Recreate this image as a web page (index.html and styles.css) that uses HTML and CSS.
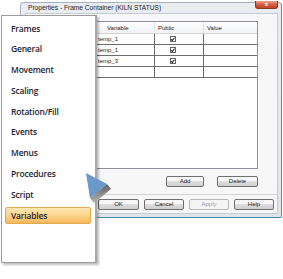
FILE: index.html
```html
<!DOCTYPE html>
<html lang="en">
<head>
  <meta charset="UTF-8" />
  <title>Properties - Variables</title>
  <link rel="stylesheet" href="styles.css">
</head>
<body>
  <div class="stage">
    <div class="dialog">
      <div class="titlebar">
        <span class="title">Properties - Frame Container (KILN STATUS)</span>
        <span class="close">x</span>
      </div>
      <div class="client">
        <div class="listbox">
          <table class="vars">
            <tr class="head">
              <th class="c-var">Variable</th>
              <th class="c-pub">Public</th>
              <th class="c-val">Value</th>
            </tr>
            <tr>
              <td class="c-var">temp_1</td>
              <td class="c-pub"><span class="check"></span></td>
              <td class="c-val"></td>
            </tr>
            <tr>
              <td class="c-var">temp_1</td>
              <td class="c-pub"><span class="check"></span></td>
              <td class="c-val"></td>
            </tr>
            <tr>
              <td class="c-var">temp_3</td>
              <td class="c-pub"><span class="check"></span></td>
              <td class="c-val"></td>
            </tr>
            <tr class="blank">
              <td class="c-var"></td>
              <td class="c-pub"></td>
              <td class="c-val"></td>
            </tr>
          </table>
        </div>
        <div class="list-actions">
          <button class="btn w38">Add</button>
          <button class="btn w41">Delete</button>
        </div>
        <div class="footer">
          <button class="btn w41">OK</button>
          <button class="btn w40">Cancel</button>
          <button class="btn w40" disabled>Apply</button>
          <button class="btn w40">Help</button>
        </div>
      </div>
    </div>

    <ul class="menu">
      <li>Frames</li>
      <li>General</li>
      <li>Movement</li>
      <li>Scaling</li>
      <li>Rotation/Fill</li>
      <li>Events</li>
      <li>Menus</li>
      <li>Procedures</li>
      <li>Script</li>
      <li class="active">Variables</li>
    </ul>

    <svg class="pointer" width="32" height="36" viewBox="0 0 32 36">
      <defs>
        <linearGradient id="shade" x1="0" y1="0" x2="0" y2="1">
          <stop offset="0" stop-color="#5f5f5f"/>
          <stop offset="1" stop-color="#b4b4b4"/>
        </linearGradient>
      </defs>
      <polygon points="23,14 27,19 10,33 6,28" fill="url(#shade)"/>
      <polygon points="2,3 23,14 6,28" fill="#6a98c9"/>
    </svg>
  </div>
</body>
</html>
```

FILE: styles.css
```css
body {
  margin: 0;
  background: #fff;
}
.stage {
  position: relative;
  width: 283px;
  height: 279px;
  overflow: hidden;
  background: #fff;
}

/* dialog window */
.dialog {
  position: absolute;
  left: 20px;
  top: 2px;
  width: 262px;
  height: 216px;
  box-sizing: border-box;
  padding: 0 3px 3px 4px;
  display: flex;
  flex-direction: column;
  background: linear-gradient(#e9edf1, #dfe5eb);
  border: 1px solid #a6b3bf;
  border-right-color: #5f8ea6;
  border-bottom-color: #3f8aa6;
  border-radius: 4px 4px 2px 2px;
}
.titlebar {
  position: relative;
  height: 10px;
  flex: none;
}
.title {
  display: block;
  padding-left: 3px;
  font: 6.6px/10px "Liberation Sans", Arial, sans-serif;
  color: #222;
  white-space: nowrap;
}
.close {
  position: absolute;
  right: 0;
  top: -2px;
  width: 23px;
  height: 8px;
  box-sizing: border-box;
  border: 1px solid #8a3626;
  border-top: none;
  border-radius: 0 0 3px 3px;
  background: linear-gradient(#eda48d, #d25a3f 55%, #c2432a);
  color: #fff;
  font: bold 6px/7px "Liberation Sans", Arial, sans-serif;
  text-align: center;
}
.client {
  flex: 1;
  display: flex;
  flex-direction: column;
  align-items: flex-end;
  background: #f7f7f7;
  border: 1px solid #c3ccd5;
  padding-top: 7px;
}

/* variables list */
.listbox {
  width: 164px;
  height: 148px;
  box-sizing: border-box;
  margin-right: 19px;
  border: 1px solid #8d9299;
  background: #fff;
}
.vars {
  width: 100%;
  border-collapse: collapse;
  font: 6px "Liberation Sans", Arial, sans-serif;
  color: #222;
}
.vars th, .vars td {
  padding: 0;
  text-align: left;
  white-space: nowrap;
}
.vars .head th {
  height: 11px;
  font-weight: normal;
  background: linear-gradient(#fff, #f1f2f4);
  border-bottom: 1px solid #d5d5d5;
  border-left: 1px solid #e2e2e2;
  padding-left: 3px;
}
.vars .head th.c-var {
  border-left: none;
  padding-left: 12px;
}
.vars td {
  height: 10px;
  border: 1px solid #6c6c6c;
  padding-left: 3px;
}
.vars td.c-var {
  border-left: none;
}
.vars td.c-val {
  border-right: none;
}
.vars .c-var { width: 47px; }
.vars .c-pub { width: 33px; }
.vars td.c-pub {
  padding-left: 15px;
}
.check {
  display: block;
  width: 4px;
  height: 4px;
  border: 1px solid #666;
  background: #fff;
  position: relative;
}
.check::after {
  content: "";
  position: absolute;
  left: 1px;
  top: -0.5px;
  width: 1px;
  height: 2.5px;
  border: solid #111;
  border-width: 0 1.2px 1.2px 0;
  transform: rotate(40deg);
}

/* buttons */
.list-actions {
  display: flex;
  gap: 13px;
  margin: 7px 19px 0 0;
}
.footer {
  align-self: stretch;
  display: flex;
  justify-content: flex-end;
  gap: 5px;
  margin-top: 7px;
  padding: 4px 3px 0 0;
  border-top: 1px solid #d4d4d4;
}
.btn {
  height: 11px;
  padding: 0;
  box-sizing: border-box;
  border: 1px solid #707070;
  border-radius: 2px;
  background: linear-gradient(#f6f6f6 45%, #dddddd 50%, #cfcfcf);
  font: 6px/9px "Liberation Sans", Arial, sans-serif;
  color: #222;
}
.btn:disabled {
  border-color: #b5b9bc;
  background: #f4f4f4;
  color: #a3a3a3;
}
.w38 { width: 38px; }
.w40 { width: 40px; }
.w41 { width: 41px; }

/* section menu */
.menu {
  position: absolute;
  left: 1px;
  top: 15px;
  width: 96px;
  height: 248px;
  box-sizing: border-box;
  margin: 0;
  padding: 3.5px 4px 0 3px;
  list-style: none;
  display: flex;
  flex-direction: column;
  gap: 3.8px;
  background: #fff;
  border: 1px solid #9c9c9c;
  border-right: 2px solid #a8a8a8;
  box-shadow: 2px 2px 2px rgba(0, 0, 0, 0.25);
}
.menu li {
  height: 17px;
  box-sizing: border-box;
  padding-left: 5px;
  border: 1px solid transparent;
  border-radius: 2px;
  font: 600 8.5px/15px "Open Sans", sans-serif;
  letter-spacing: -0.2px;
  color: #1f2330;
}
.menu li.active {
  border-color: #e0a94f;
  background: linear-gradient(#fee7b5, #fcd38a 50%, #f8b85c);
}

.pointer {
  position: absolute;
  left: 84px;
  top: 170px;
}
```
